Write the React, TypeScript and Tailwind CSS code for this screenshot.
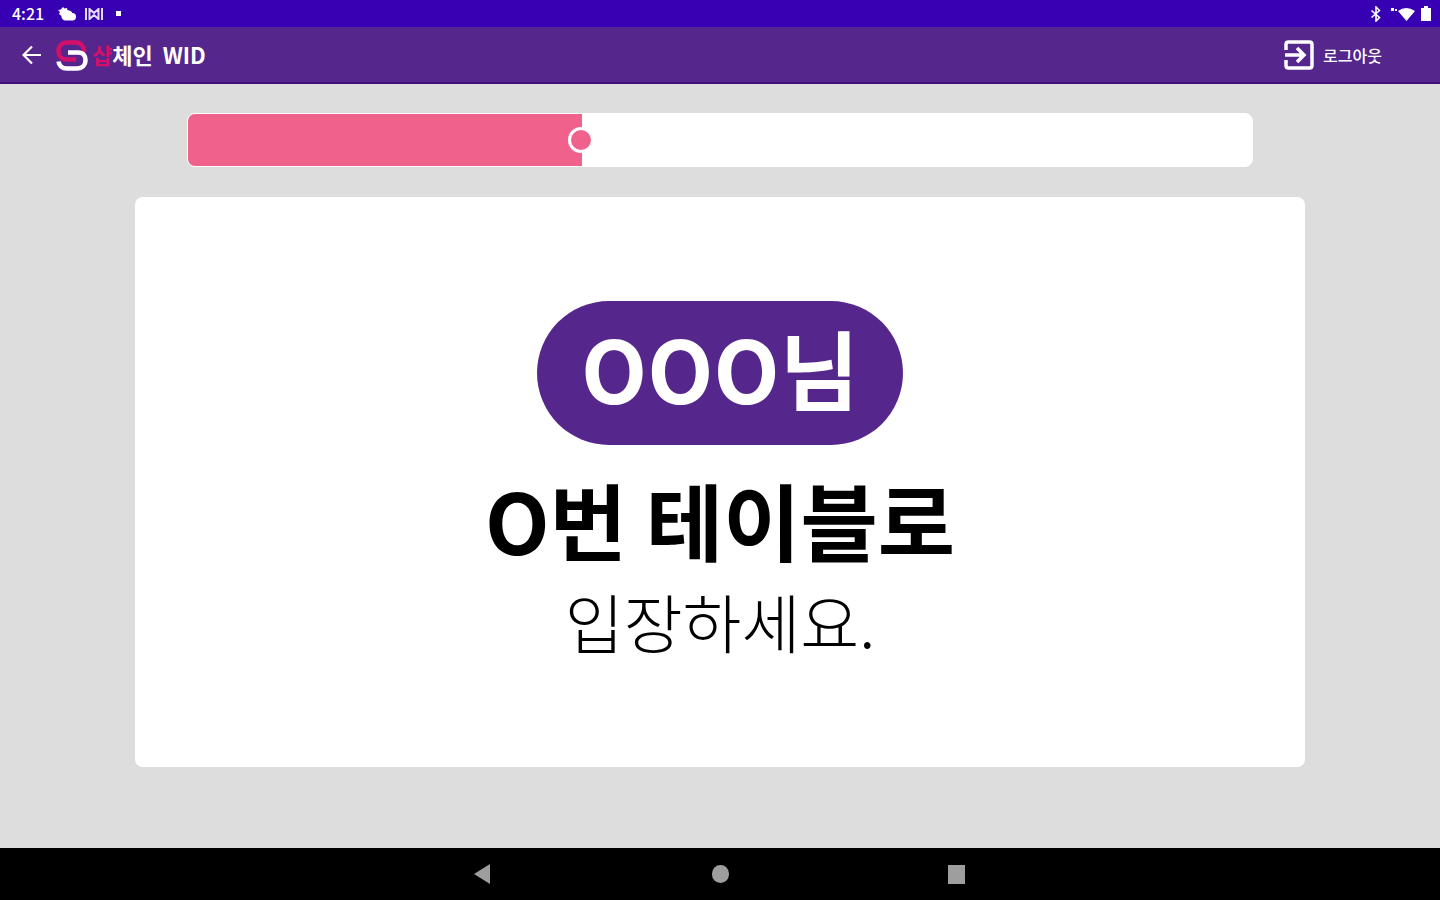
import { useState } from "react";

function LogoMark() {
  return (
    <svg viewBox="0 0 32 32" className="h-8 w-8" fill="none" strokeWidth="4.5" strokeLinejoin="round" aria-hidden="true">
      <path d="M28 13.500V12C28 7 24.500 3.500 20 3.500H11C6 3.500 2.500 7 2.500 12C2.500 17 6 20.500 11 20.500H20" stroke="#d1106a" />
      <path d="M12 13.500H22C27 13.500 29.500 16.500 29.500 21C29.500 26 26 29.500 21 29.500H11C6 29.500 3 26.500 2.500 22.500" stroke="#fff" />
    </svg>
  );
}

function StatusBar() {
  return (
    <div className="flex h-[27px] items-center justify-between bg-[#3700b3] pl-3 pr-2 text-white">
      <div className="flex items-center">
        <time className="w-[46px] pb-0.5 text-base font-medium">4:21</time>
        <svg viewBox="0 0 18 14" className="h-[14px] w-[18px]" fill="#fff" aria-hidden="true">
          <path d="M5 0l1.500 1.500L9 1l.5 2.300A5 5 0 0 1 14.500 6 3.700 3.700 0 0 1 14 13.500H7A4 4 0 0 1 3.500 9L1 7l1-2L0 3l2.800-.5z" />
        </svg>
        <svg viewBox="0 0 20 14" className="ml-2 h-[14px] w-5" fill="none" stroke="#e4dcf8" strokeWidth="2" aria-hidden="true">
          <path d="M2 1v12M5.500 1v12M14.500 1v12M18 1v12M5.500 2l4.500 4 4.500-4M5.500 12l4.500-4 4.500 4" />
        </svg>
        <span className="ml-3 h-[5px] w-[5px] bg-white" />
      </div>
      <div className="flex items-center">
        <svg viewBox="0 0 12 16" className="mr-2 h-4 w-3" fill="none" stroke="#fff" strokeWidth="1.600" aria-hidden="true">
          <path d="M1.500 4.500l8 7L6 15V1l3.500 3.500-8 7" />
        </svg>
        <svg viewBox="0 0 26 16" className="h-4 w-[26px]" fill="#fff" aria-hidden="true">
          <path d="M1 2h3v3H1zM5 3h2v2H5zM8 5q8-6 17 0l-8.500 10z" />
        </svg>
        <svg viewBox="0 0 12 16" className="ml-1 h-4 w-3" fill="#fff" aria-hidden="true">
          <path d="M4 0h4v2h3v13H1V2h3z" />
        </svg>
      </div>
    </div>
  );
}

function AppBar() {
  return (
    <header className="flex h-[57px] items-center justify-between border-b-2 border-[#3f0f7a] bg-[#55268c] pl-5 pr-[58px] text-white">
      <div className="flex items-center">
        <button type="button" aria-label="뒤로" className="p-0.5">
          <svg viewBox="0 0 20 20" className="h-5 w-5" fill="none" stroke="#fff" strokeWidth="2.200" aria-hidden="true">
            <path d="M19 10H2M10 1.500L1.500 10l8.500 8.500" />
          </svg>
        </button>
        <a href="#" className="ml-3 flex items-center">
          <LogoMark />
          <span className="ml-1 pb-0.5 text-[22px] leading-8 font-bold">
            <span className="text-[#d1106a]">샵</span>체인&nbsp; WID
          </span>
        </a>
      </div>
      <button type="button" className="flex items-center gap-2 text-base font-medium">
        <svg viewBox="0 0 32 32" className="h-8 w-8" fill="none" stroke="#fff" strokeWidth="3.500" aria-hidden="true">
          <path d="M3 11V5.500Q3 3 5.500 3H26.500Q29 3 29 5.500V26.500Q29 29 26.500 29H5.500Q3 29 3 26.500V21M2 16H20M14 9l7 7-7 7" />
        </svg>
        로그아웃
      </button>
    </header>
  );
}

function ProgressSlider() {
  const [value, setValue] = useState(366);
  const edge = `calc(${value / 10}% + 5px)`;

  return (
    <input
      type="range"
      aria-label="진행"
      min={0}
      max={1000}
      value={value}
      onChange={(e) => setValue(Number(e.target.value))}
      style={{ backgroundImage: `linear-gradient(to right, #f0628b ${edge}, #fff ${edge})` }}
      className="block h-[54px] w-[74%] appearance-none rounded-lg border border-white [&::-webkit-slider-thumb]:h-[26px] [&::-webkit-slider-thumb]:w-[26px] [&::-webkit-slider-thumb]:appearance-none [&::-webkit-slider-thumb]:rounded-full [&::-webkit-slider-thumb]:border-3 [&::-webkit-slider-thumb]:border-white [&::-webkit-slider-thumb]:bg-[#f0628b]"
    />
  );
}

function NavBar() {
  return (
    <nav className="flex h-[52px] items-center justify-center gap-[216px] bg-black">
      <button type="button" aria-label="이전" className="flex w-5 justify-center">
        <svg viewBox="0 0 20 20" className="h-5 w-5" fill="#9e9e9e" aria-hidden="true">
          <path d="M16 0v20L0 10z" />
        </svg>
      </button>
      <button type="button" aria-label="홈" className="flex w-5 justify-center">
        <span className="h-[18px] w-[17px] rounded-full bg-[#9e9e9e]" />
      </button>
      <button type="button" aria-label="최근 앱" className="flex w-5 justify-center">
        <span className="h-[19px] w-[17px] bg-[#9e9e9e]" />
      </button>
    </nav>
  );
}

export default function App() {
  return (
    <div className="flex min-h-screen flex-col bg-[#ddd] font-['Noto_Sans_CJK_KR',sans-serif]">
      <StatusBar />
      <AppBar />
      <main className="flex flex-1 flex-col items-center gap-[30px] pt-[29px] pb-[81px]">
        <ProgressSlider />
        <section className="flex w-[81.2%] flex-1 flex-col items-center justify-center rounded-lg bg-white text-black">
          <h1 className="rounded-full bg-[#55268c] px-11 pb-3 text-[86px] leading-[132px] font-bold text-white">OOO님</h1>
          <p className="mt-4 text-[84px] leading-[116px] font-bold">O번 테이블로</p>
          <p className="text-[64px] leading-[86px] font-light">입장하세요.</p>
        </section>
      </main>
      <NavBar />
    </div>
  );
}
